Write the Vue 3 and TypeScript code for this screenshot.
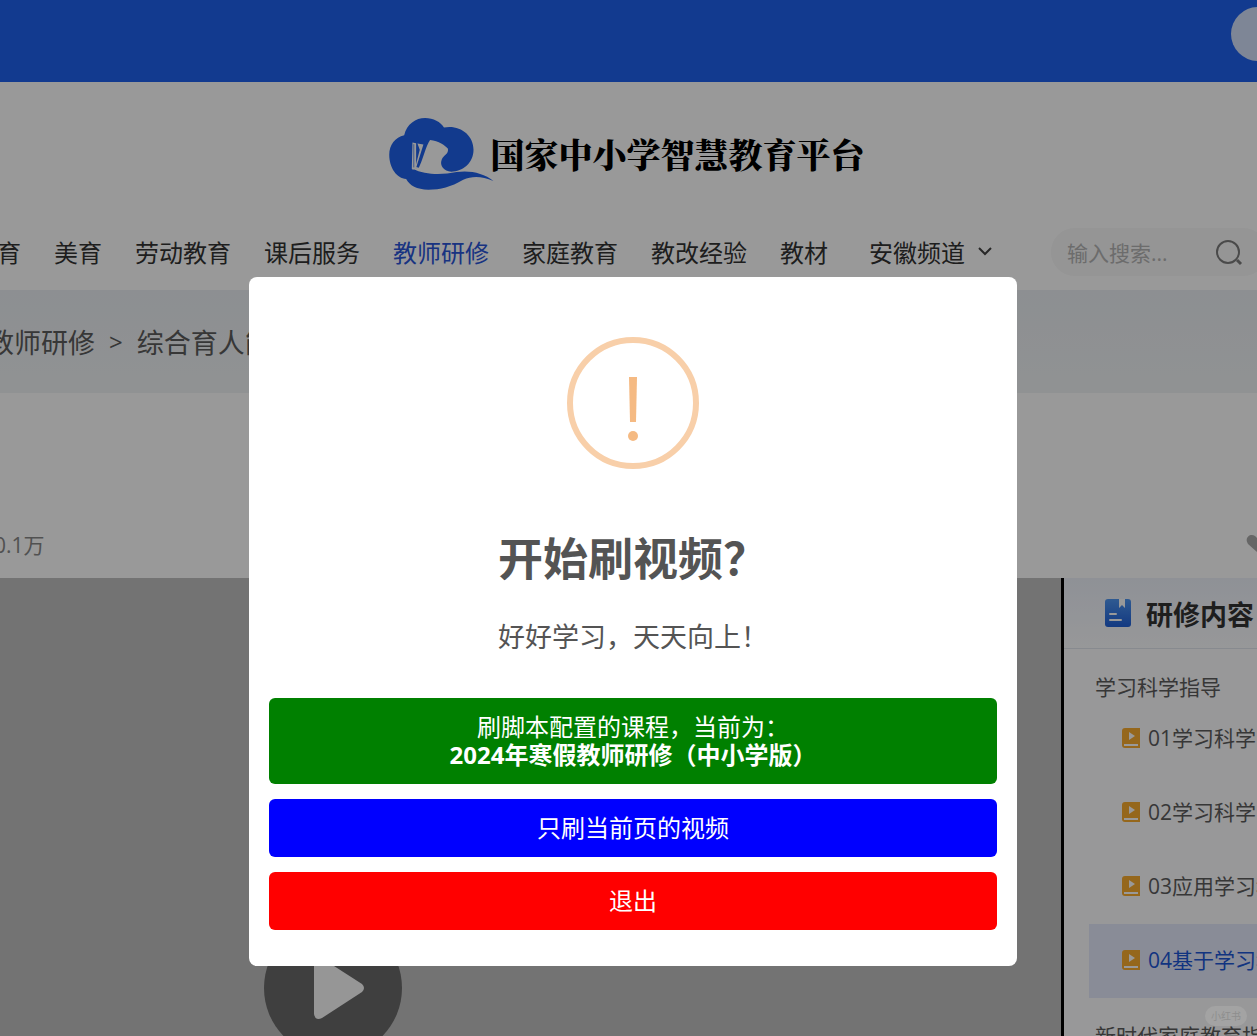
<script setup lang="ts">
import { ref } from 'vue'

interface NavItem {
  label: string
  active?: boolean
}

const navItems: NavItem[] = [
  { label: '体育' },
  { label: '美育' },
  { label: '劳动教育' },
  { label: '课后服务' },
  { label: '教师研修', active: true },
  { label: '家庭教育' },
  { label: '教改经验' },
  { label: '教材' },
]

const lessons = ref([
  { title: '01学习科学的基本原理', active: false },
  { title: '02学习科学的课堂应用', active: false },
  { title: '03应用学习科学改进教学', active: false },
  { title: '04基于学习科学的设计', active: true },
])

const keyword = ref('')
</script>

<template>
  <div class="page">
    <div class="topbar"><span class="avatar"></span></div>

    <header class="header">
      <div class="brand">
        <svg class="logo" viewBox="57 54 315 217" aria-hidden="true">
          <path
            fill="#1e61ec"
            d="M102 106C110 72 137 54 165 54C190 54 212 66 222 83C268 74 311 104 311 150C311 190 278 216 244 216C222 215 208 198 215 180C221 165 236 164 234 147C226 136 206 123 180 120C168 136 158 180 146 204L128 207C165 226 215 226 260 217C300 211 342 220 371 244C336 229 308 228 280 240C242 262 212 270 175 270C140 270 118 257 108 238C80 236 57 205 57 165C57 135 75 112 102 106Z"
          />
          <path fill="#fff" d="M127 128L138 130L138 202L146 204L128 210L125 207Z" />
          <path fill="#fff" d="M142 131L160 134L139 201L135 204L149 150Z" />
          <path fill="none" stroke="#1e61ec" stroke-width="2" d="M131 133V203" />
        </svg>
        <h1 class="brand-name">国家中小学智慧教育平台</h1>
      </div>
      <div class="nav-row">
        <nav class="nav">
          <a
            v-for="item in navItems"
            :key="item.label"
            href="#"
            :class="['nav-link', { active: item.active }]"
            >{{ item.label }}</a
          >
          <a href="#" class="nav-link channel">
            安徽频道
            <svg width="14" height="10" viewBox="0 0 14 10" fill="none" stroke="#444" stroke-width="2">
              <path d="M1 2L7 8L13 2" />
            </svg>
          </a>
        </nav>
        <label class="search">
          <input v-model="keyword" type="text" placeholder="输入搜索..." aria-label="搜索" />
          <svg width="28" height="28" viewBox="0 0 28 28" fill="none" stroke="#7c7c7c" stroke-width="2">
            <circle cx="13" cy="13" r="11" />
            <path d="M22 21L26 25" stroke-width="3" />
          </svg>
        </label>
      </div>
    </header>

    <div class="crumbs">
      <a href="#">教师研修</a><span class="sep">&gt;</span><a href="#">综合育人能力</a>
    </div>

    <section class="meta">
      <span class="views">0.1万</span>
      <svg class="heart" width="24" height="20" viewBox="0 0 24 20" aria-hidden="true">
        <path fill="#aaa" d="M12 19L2 10C-2 4 4-1 9 2L12 5L15 2C20-1 26 4 22 10Z" />
      </svg>
    </section>

    <main class="content">
      <div class="player">
        <button class="play" type="button" aria-label="播放">
          <svg width="54" height="66" viewBox="0 0 54 66">
            <path fill="#fafafa" d="M2 5Q2 0 8 2L50 29Q54 33 50 37L10 63Q3 66 2 59Z" />
          </svg>
        </button>
      </div>
      <aside class="side">
        <h2 class="side-title">
          <svg width="26" height="28" viewBox="0 0 26 28" aria-hidden="true">
            <defs>
              <linearGradient id="book" x1="0" y1="0" x2="0" y2="1">
                <stop offset="0" stop-color="#4f96f2" />
                <stop offset="1" stop-color="#2060d8" />
              </linearGradient>
            </defs>
            <path fill="url(#book)" d="M3 0H23Q26 0 26 3V25Q26 28 23 28H3Q0 28 0 25V3Q0 0 3 0Z" />
            <path fill="#fff" d="M14 0H20V9L17 6L14 9Z" />
            <path stroke="#fff" stroke-width="2" stroke-linecap="round" d="M5 15H11M5 21H16" />
          </svg>
          研修内容
        </h2>
        <h3 class="group">学习科学指导</h3>
        <ul class="lessons">
          <li v-for="lesson in lessons" :key="lesson.title" :class="{ active: lesson.active }">
            <svg width="18" height="20" viewBox="0 0 18 20" aria-hidden="true">
              <path fill="#f9ac30" d="M3 0H18V20H3Q0 20 0 17V3Q0 0 3 0Z" />
              <path fill="#fff" d="M7 4L13 8L7 12Z" />
              <path stroke="#fff" stroke-width="2" d="M2 17H16" />
            </svg>
            <a href="#">{{ lesson.title }}</a>
          </li>
        </ul>
        <h3 class="group">新时代家庭教育指导</h3>
      </aside>
    </main>

    <div class="overlay">
      <div class="modal" role="dialog" aria-modal="true" aria-labelledby="dialog-title">
        <svg class="warn" width="132" height="132" viewBox="0 0 132 132" aria-hidden="true">
          <circle cx="66" cy="66" r="63" fill="none" stroke="#f8cfa9" stroke-width="6" />
          <path fill="#f5ba83" d="M62 40H70L69 85H63Z" />
          <circle cx="66" cy="99" r="5" fill="#f5ba83" />
        </svg>
        <h2 id="dialog-title" class="modal-title">开始刷视频？</h2>
        <p class="modal-text">好好学习，天天向上！</p>
        <div class="actions">
          <button type="button" class="btn green">
            刷脚本配置的课程，当前为：<br /><b>2024年寒假教师研修（中小学版）</b>
          </button>
          <button type="button" class="btn blue">只刷当前页的视频</button>
          <button type="button" class="btn red">退出</button>
        </div>
      </div>
    </div>
    <span class="watermark">小红书</span>
  </div>
</template>

<style>
body {
  overflow: hidden;
}
</style>

<style scoped>
* {
  box-sizing: border-box;
}
.page {
  position: relative;
  display: flex;
  flex-direction: column;
  height: 100vh;
  overflow: hidden;
  background: #fff;
  color: #333;
  font-family: 'Open Sans', 'Noto Sans CJK SC', sans-serif;
  font-weight: 400;
  white-space: nowrap;
}
a {
  color: inherit;
  text-decoration: none;
}
h1,
h2,
h3,
p,
ul {
  margin: 0;
  padding: 0;
}
.topbar {
  display: flex;
  flex: none;
  justify-content: flex-end;
  height: 82px;
  padding-top: 7px;
  background: #1e61ee;
}
.avatar {
  width: 54px;
  height: 54px;
  margin-right: -28px;
  border-radius: 50%;
  background: #d2e0fa;
}
.header {
  flex: none;
  height: 208px;
  padding-top: 36px;
}
.brand {
  display: flex;
  justify-content: center;
  height: 72px;
  padding-right: 4px;
}
.logo {
  width: 105px;
  height: 72px;
}
.brand-name {
  margin-left: -3px;
  color: #000;
  font: 900 34px/72px 'Noto Serif CJK SC', 'Noto Sans CJK SC', serif;
}
.nav-row {
  display: flex;
  align-items: center;
  justify-content: space-between;
  height: 48px;
  margin-top: 38px;
}
.nav {
  display: flex;
  gap: 33px;
  margin-left: -27px;
  padding-bottom: 2px;
  font-size: 24px;
}
.nav-link.active {
  color: #2a55d8;
}
.channel {
  display: flex;
  align-items: center;
  gap: 13px;
  padding-left: 8px;
}
.search {
  display: flex;
  align-items: center;
  gap: 8px;
  height: 48px;
  margin-right: -10px;
  padding: 2px 24px 0 16px;
  border-radius: 24px;
  background: #f8f8f8;
}
.search input {
  width: 140px;
  padding: 0;
  border: 0;
  outline: 0;
  background: none;
  font: inherit;
  font-size: 21px;
}
.search input::placeholder {
  color: #b4b4b4;
}
.crumbs {
  display: flex;
  flex: none;
  align-items: center;
  height: 103px;
  margin-left: -13px;
  background: linear-gradient(#ebeff3, #f1f4f6);
  color: #5c5c5c;
  font-size: 27px;
}
.sep {
  margin: 0 14px;
  font-size: 24px;
}
.meta {
  display: flex;
  flex: none;
  align-items: flex-end;
  justify-content: space-between;
  height: 185px;
  padding-bottom: 18px;
  color: #888;
  font-size: 21px;
  line-height: 30px;
}
.views {
  margin-left: -6px;
}
.heart {
  margin: 0 -13px 6px 0;
}
.content {
  display: flex;
  flex: 1;
  min-height: 0;
}
.player {
  position: relative;
  flex: 1;
  border-right: 3px solid #000;
  background: #c0c0c0;
}
.play {
  position: absolute;
  top: 341px;
  left: 264px;
  width: 138px;
  height: 138px;
  padding: 0 0 0 12px;
  border: 0;
  border-radius: 50%;
  background: #696969;
}
.play svg {
  display: block;
  margin: 0 auto;
}
.side {
  width: 193px;
  overflow: hidden;
  background: #fdfdff;
}
.side-title {
  display: flex;
  align-items: center;
  gap: 15px;
  height: 71px;
  padding-left: 41px;
  border-bottom: 1px solid #e2e6ee;
  background: linear-gradient(#eef2fb, #fcfdff);
  font-size: 27px;
  font-weight: 700;
}
.group {
  padding: 23px 0 0 31px;
  color: #5c5c5c;
  font-size: 21px;
  font-weight: inherit;
  line-height: 30px;
}
.lessons {
  margin-left: 25px;
  list-style: none;
  color: #5c5c5c;
  font-size: 21px;
}
.lessons li {
  display: flex;
  align-items: center;
  gap: 8px;
  height: 74px;
  padding: 0 0 3px 33px;
}
.lessons a {
  padding-bottom: 2px;
}
.lessons svg {
  flex: none;
}
.lessons li.active {
  background: #e4e9fc;
  color: #1d57d6;
}
.overlay {
  position: absolute;
  inset: 0;
  display: flex;
  align-items: flex-start;
  justify-content: center;
  padding: 277px 0 0 9px;
  background: rgba(0, 0, 0, 0.4);
}
.modal {
  display: flex;
  flex-direction: column;
  align-items: center;
  width: 768px;
  padding: 60px 20px 36px;
  border-radius: 8px;
  background: #fff;
  color: #545454;
}
.modal-title {
  margin-top: 56px;
  font-size: 45px;
  font-weight: 700;
  line-height: 68px;
}
.modal-text {
  margin-top: 24px;
  font-size: 27px;
  line-height: 40px;
}
.actions {
  display: flex;
  flex-direction: column;
  gap: 15px;
  width: 100%;
  margin-top: 41px;
}
.btn {
  padding: 15px;
  border: 0;
  border-radius: 6px;
  color: #fff;
  font: inherit;
  font-size: 24px;
  line-height: 28px;
}
.btn b {
  font-weight: 700;
}
.green {
  background: #008000;
}
.blue {
  background: #00f;
}
.red {
  background: #f00;
}
.watermark {
  position: absolute;
  right: 10px;
  bottom: 10px;
  padding: 0 6px;
  border-radius: 10px;
  background: #a3a3a3;
  color: #8e8e8e;
  font-size: 10px;
  line-height: 20px;
}
</style>
